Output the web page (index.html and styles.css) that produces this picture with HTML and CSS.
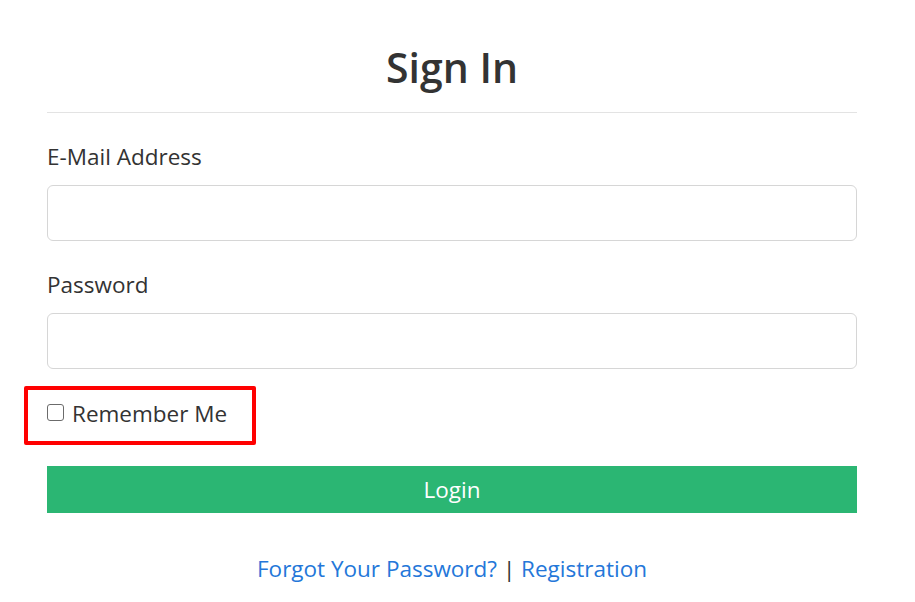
FILE: index.html
```html
<!DOCTYPE html>
<html>
<head>
<meta charset="utf-8">
<link rel="stylesheet" href="styles.css">
</head>
<body>
<div class="page">
  <h1 class="title">Sign In</h1>
  <hr class="rule">
  <form class="form">
    <div class="field">
      <label class="label">E-Mail Address</label>
      <input class="input" type="email">
    </div>
    <div class="field">
      <label class="label">Password</label>
      <input class="input" type="password">
    </div>
    <div class="remember-wrap">
      <label class="remember"><span class="box"></span><span>Remember Me</span></label>
    </div>
    <button class="login" type="button">Login</button>
  </form>
  <div class="links"><a href="#">Forgot Your Password?</a> | <a href="#">Registration</a></div>
</div>
</body>
</html>
```
FILE: styles.css
```css
* { box-sizing: border-box; }
body {
  margin: 0;
  background: #fff;
  font-family: "Open Sans", "Noto Sans", sans-serif;
  color: #333;
}
.page {
  padding: 39px 58px 0 47px;
  width: 915px;
}
.title {
  margin: 0;
  text-align: center;
  font-size: 41px;
  font-weight: 600;
  line-height: 56px;
  color: #333;
}
.rule {
  margin: 17px 0 0;
  border: 0;
  border-top: 1px solid #e3e3e3;
}
.form { display: flex; flex-direction: column; }
.field { display: flex; flex-direction: column; margin-top: 29px; }
.field + .field { margin-top: 29px; }
.label {
  font-size: 22.5px;
  line-height: 30px;
  color: #333;
  margin-bottom: 13px;
}
.input {
  height: 56px;
  border: 1px solid #d6d6d6;
  border-radius: 6px;
  background: #fff;
}
.remember-wrap {
  margin: 17px 0 0 -23px;
  width: 232px;
  height: 59px;
  border: 4px solid #f00;
  border-radius: 2px;
  display: flex;
  align-items: center;
  padding: 0 0 5px 19px;
}
.remember {
  display: flex;
  align-items: center;
  font-size: 22.5px;
  color: #333;
}
.box {
  width: 17px;
  height: 17px;
  border: 1px solid #6b6b6b;
  border-radius: 3px;
  margin-right: 8px;
  margin-top: -2px;
}
.login {
  margin-top: 21px;
  height: 47px;
  border: 0;
  background: #2bb673;
  color: #fff;
  font-family: inherit;
  font-size: 22.5px;
}
.links {
  margin-top: 40px;
  text-align: center;
  font-size: 22.5px;
  color: #333;
}
.links a { color: #2477d9; text-decoration: none; }
```
